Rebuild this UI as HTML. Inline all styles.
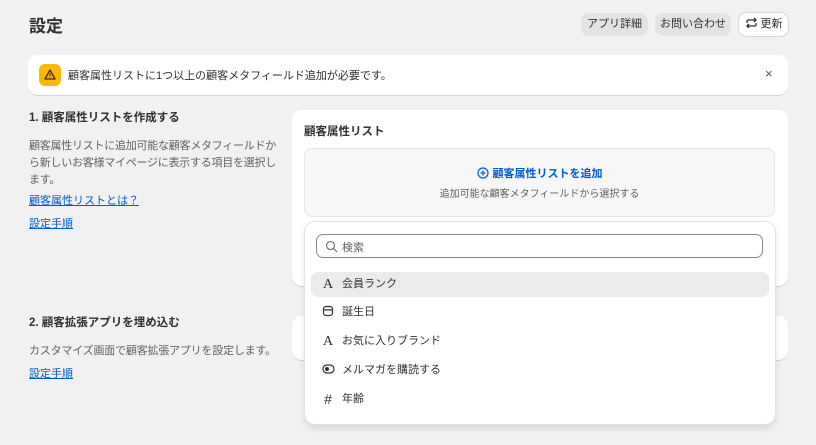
<!DOCTYPE html>
<html><head><meta charset="utf-8"><style>
*{box-sizing:border-box;margin:0;padding:0}
body{width:816px;height:445px;overflow:hidden;background:#f1f1f1;font-family:"Liberation Sans","Noto Sans CJK JP",sans-serif;color:#303030;position:relative}
.a{position:absolute}
.btn{position:absolute;top:13px;height:23px;border-radius:8px;background:#e3e3e3;font-size:11px;line-height:23px;text-align:center;color:#303030}
.card{position:absolute;background:#fff;border-radius:10px;box-shadow:0 1px 0 #d4d4d4}
.lnk{color:#005bd3;text-decoration:underline;font-size:11px}
.row{position:absolute;left:6px;right:6px;height:25px;border-radius:7px;font-size:11px;line-height:25px;padding-left:31px}
.ic{position:absolute;left:10px;top:0;width:14px;text-align:center;font-family:"Liberation Serif",serif;font-size:14px;color:#303030}
</style></head><body>
<div class="a" style="left:29px;top:12px;font-size:17px;font-weight:bold">設定</div>
<div class="btn" style="left:581px;width:67px">アプリ詳細</div>
<div class="btn" style="left:655px;width:76px">お問い合わせ</div>
<div class="btn" style="left:739px;width:49px;background:#fff;box-shadow:0 0 0 1px #d8d8d8,0 1px 0 #bbb"><svg width="13" height="12" viewBox="0 0 13 12" style="vertical-align:-2px;margin-right:3px"><path d="M2 6V4.5Q2 3 3.5 3H11M9 1l2 2-2 2M11 6v1.5Q11 9 9.5 9H2M4 11L2 9l2-2" fill="none" stroke="#303030" stroke-width="1.3"/></svg>更新</div>

<div class="card" style="left:28px;top:55px;width:760px;height:40px">
 <div class="a" style="left:11px;top:9px;width:22px;height:22px;border-radius:6px;background:#ffb800"><svg width="22" height="22" viewBox="0 0 22 22"><path d="M11 6L16 15H6Z" fill="none" stroke="#303030" stroke-width="1.3" stroke-linejoin="round"/><path d="M11 9.5v2.5M11 13.3v.4" stroke="#303030" stroke-width="1.2"/></svg></div>
 <div class="a" style="left:40px;top:12px;font-size:11px">顧客属性リストに1つ以上の顧客メタフィールド追加が必要です。</div>
 <div class="a" style="left:737px;top:11px;font-size:13px;color:#555">×</div>
</div>

<div class="a" style="left:29px;top:109px;font-size:11.5px;font-weight:bold">1. 顧客属性リストを作成する</div>
<div class="a" style="left:29px;top:138px;width:250px;font-size:11px;line-height:17px;color:#616161;letter-spacing:-0.25px">顧客属性リストに追加可能な顧客メタフィールドから新しいお客様マイページに表示する項目を選択します。</div>
<div class="a lnk" style="left:29px;top:192px">顧客属性リストとは？</div>
<div class="a lnk" style="left:29px;top:215px">設定手順</div>

<div class="a" style="left:29px;top:314px;font-size:11.5px;font-weight:bold">2. 顧客拡張アプリを埋め込む</div>
<div class="a" style="left:29px;top:342px;font-size:11px;color:#616161;letter-spacing:-0.2px">カスタマイズ画面で顧客拡張アプリを設定します。</div>
<div class="a lnk" style="left:29px;top:365px">設定手順</div>

<div class="card" style="left:292px;top:110px;width:496px;height:176px">
 <div class="a" style="left:12px;top:13px;font-size:11.5px;font-weight:bold">顧客属性リスト</div>
 <div class="a" style="left:12px;top:38px;width:471px;height:69px;background:#f7f7f7;border:1px solid #e6e6e6;border-radius:8px">
  <div class="a" style="left:0;right:0;top:16px;text-align:center;font-size:11px;font-weight:bold;color:#005bd3"><svg width="12" height="12" viewBox="0 0 12 12" style="vertical-align:-2px;margin-right:4px"><circle cx="6" cy="6" r="5" fill="none" stroke="#005bd3" stroke-width="1.2"/><path d="M6 3.5v5M3.5 6h5" stroke="#005bd3" stroke-width="1.2"/></svg>顧客属性リストを追加</div>
  <div class="a" style="left:0;right:0;top:36px;text-align:center;font-size:10px;color:#616161">追加可能な顧客メタフィールドから選択する</div>
 </div>
</div>
<div class="card" style="left:292px;top:316px;width:496px;height:44px"></div>

<div class="a" style="left:305px;top:222px;width:470px;height:202px;background:#fff;border-radius:10px;box-shadow:0 0 0 1px #e3e3e3,0 4px 8px rgba(0,0,0,.12)">
 <div class="a" style="left:11px;top:12px;width:447px;height:24px;border:1px solid #8a8a8a;border-radius:7px">
  <svg class="a" style="left:8px;top:5px" width="13" height="13" viewBox="0 0 13 13"><circle cx="5.5" cy="5.5" r="4" fill="none" stroke="#616161" stroke-width="1.1"/><path d="M8.5 8.5L12 12" stroke="#616161" stroke-width="1.1"/></svg>
  <div class="a" style="left:25px;top:4px;font-size:11px;color:#616161">検索</div>
 </div>
 <div class="row" style="top:50px;background:#ebebeb"><span class="ic">A</span>会員ランク</div>
 <div class="row" style="top:78px"><span class="ic"><svg width="12" height="12" viewBox="0 0 12 12" style="vertical-align:-1px"><rect x="1.5" y="1.5" width="9" height="9" rx="2.5" fill="none" stroke="#303030" stroke-width="1.2"/><path d="M1.5 5h9" stroke="#303030" stroke-width="1.2"/></svg></span>誕生日</div>
 <div class="row" style="top:107px"><span class="ic">A</span>お気に入りブランド</div>
 <div class="row" style="top:136px"><span class="ic"><svg width="13" height="10" viewBox="0 0 13 10" style="vertical-align:0"><rect x="1" y="1" width="11" height="8" rx="4" fill="none" stroke="#303030" stroke-width="1.2"/><circle cx="5" cy="5" r="2" fill="#303030"/></svg></span>メルマガを購読する</div>
 <div class="row" style="top:165px"><span class="ic" style="font-family:'Liberation Sans',sans-serif;font-size:14px">#</span>年齢</div>
</div>
</body></html>
